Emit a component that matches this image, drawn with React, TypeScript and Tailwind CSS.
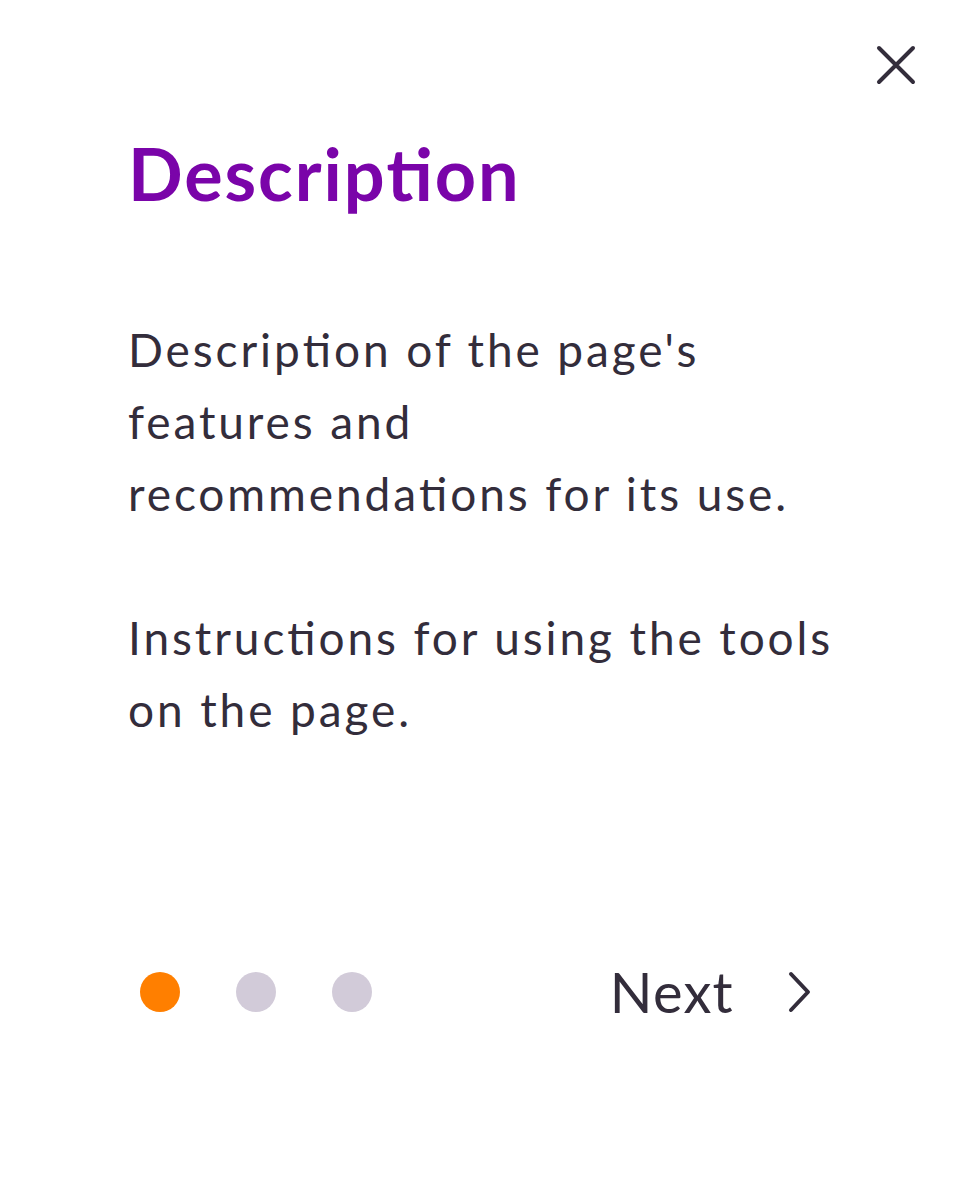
import { Fragment } from "react";

// keep Lato's "ti" ligature even with letter-spacing on
function Lig({ text, gap }: { text: string; gap: string }) {
  const parts = text.split("ti");
  return (
    <>
      {parts.map((p, i) => (
        <Fragment key={i}>
          {p}
          {i < parts.length - 1 && (
            <span className={`tracking-normal ${gap}`}>ti</span>
          )}
        </Fragment>
      ))}
    </>
  );
}

function Lines({ lines }: { lines: string[] }) {
  return (
    <>
      {lines.map((line, i) => (
        <Fragment key={i}>
          <Lig text={line} gap="mr-[2.9px]" />
          {i < lines.length - 1 && <br />}
        </Fragment>
      ))}
    </>
  );
}

const intro = ["Description of the page's", "features and", "recommendations for its use."];
const howTo = ["Instructions for using the tools", "on the page."];

export default function App() {
  return (
    <div
      className="relative h-[1184px] w-[960px] bg-white text-[#332d3b]"
      style={{ fontFamily: "Lato, 'Noto Sans', sans-serif" }}
    >
      <button className="absolute left-[872px] top-[41px] flex h-[48px] w-[48px] items-center justify-center">
        <svg width="40" height="40" viewBox="0 0 40 40" fill="none">
          <path
            d="M3 3 L37 37 M37 3 L3 37"
            stroke="#332d3b"
            strokeWidth="4"
            strokeLinecap="round"
          />
        </svg>
      </button>

      <div className="flex flex-col px-[128px] pt-[137px]">
        <h1 className="text-[72px] font-bold leading-none tracking-[1.9px] text-[#7a04a9]">
          <Lig text="Description" gap="mr-[1.9px]" />
        </h1>

        <div className="mt-[105px] whitespace-nowrap text-[46px] leading-[72px] tracking-[2.9px]">
          <p>
            <Lines lines={intro} />
          </p>
          <p className="mt-[72px]">
            <Lines lines={howTo} />
          </p>
        </div>

        <div className="mt-[218px] flex items-center justify-between">
          <div className="flex items-center gap-[56px] pl-[12px]">
            <span className="h-[40px] w-[40px] rounded-full bg-[#ff7f00]" />
            <span className="h-[40px] w-[40px] rounded-full bg-[#d2cbd9]" />
            <span className="h-[40px] w-[40px] rounded-full bg-[#d2cbd9]" />
          </div>
          <button className="flex items-center gap-[54px] pr-[20px] text-[56px] leading-none tracking-[1.3px]">
            <span>Next</span>
            <svg width="24" height="42" viewBox="0 0 24 42" fill="none">
              <path
                d="M3 3 L20 21 L3 39"
                stroke="#332d3b"
                strokeWidth="4"
                strokeLinecap="round"
                strokeLinejoin="round"
              />
            </svg>
          </button>
        </div>
      </div>
    </div>
  );
}
